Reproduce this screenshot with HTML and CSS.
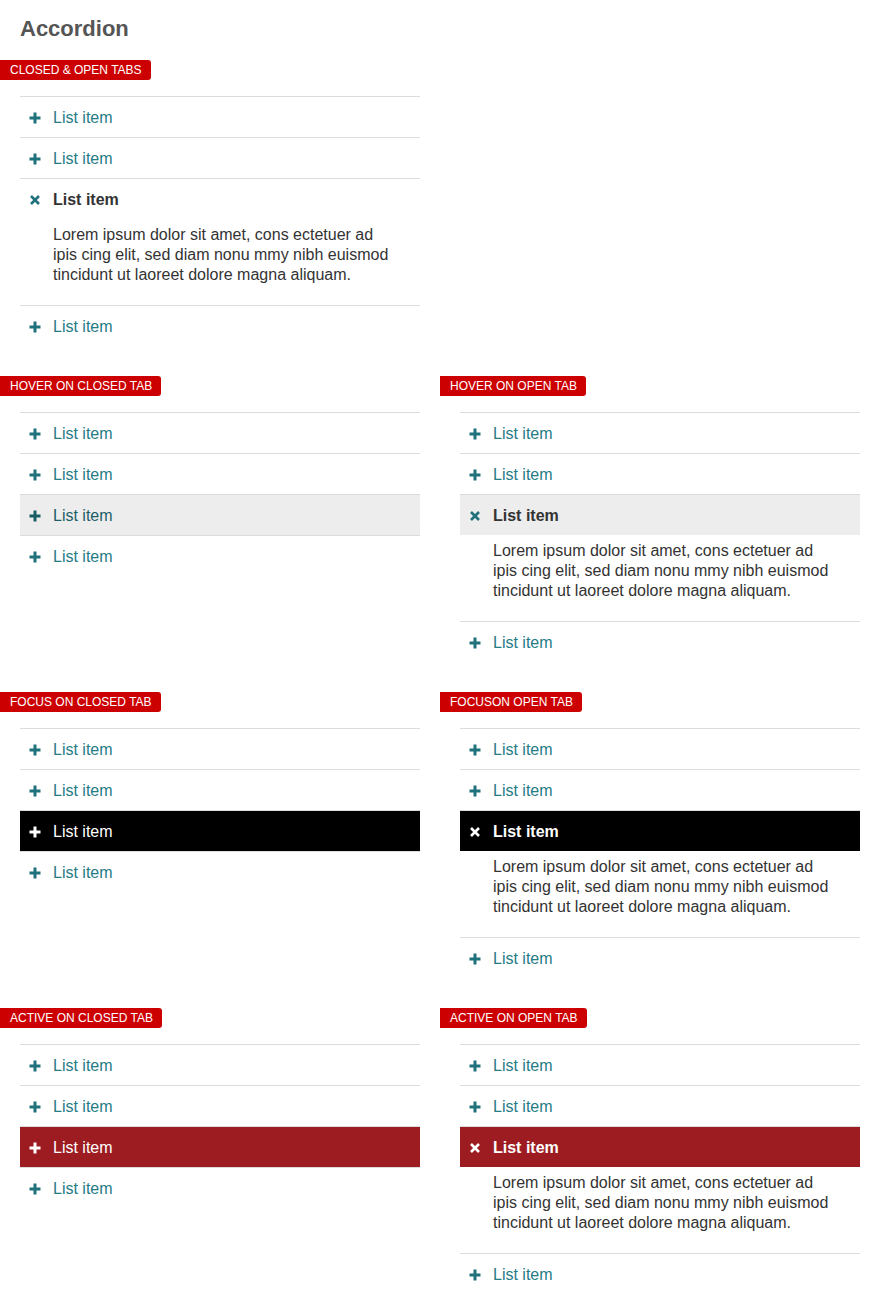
FILE: index.html
```html
<!DOCTYPE html>
<html>
<head>
<meta charset="utf-8">
<link rel="stylesheet" href="styles.css">
</head>
<body>
<h1 class="title">Accordion</h1>

<div class="grid">
  <section class="demo">
    <div class="badge">CLOSED &amp; OPEN TABS</div>
    <ul class="acc">
      <li class="item"><div class="head"><svg class="ico" viewBox="0 0 12 12"><path d="M6 0.5v11M0.5 6h11"/></svg><span>List item</span></div></li>
      <li class="item"><div class="head"><svg class="ico" viewBox="0 0 12 12"><path d="M6 0.5v11M0.5 6h11"/></svg><span>List item</span></div></li>
      <li class="item open"><div class="head"><svg class="ico x" viewBox="0 0 12 12"><path d="M2 2l8 8M10 2l-8 8"/></svg><span>List item</span></div>
        <p class="body">Lorem ipsum dolor sit amet, cons ectetuer ad ipis cing elit, sed diam nonu mmy nibh euismod tincidunt ut laoreet dolore magna aliquam.</p></li>
      <li class="item"><div class="head"><svg class="ico" viewBox="0 0 12 12"><path d="M6 0.5v11M0.5 6h11"/></svg><span>List item</span></div></li>
    </ul>
  </section>
  <section class="demo"></section>

  <section class="demo">
    <div class="badge">HOVER ON CLOSED TAB</div>
    <ul class="acc">
      <li class="item"><div class="head"><svg class="ico" viewBox="0 0 12 12"><path d="M6 0.5v11M0.5 6h11"/></svg><span>List item</span></div></li>
      <li class="item"><div class="head"><svg class="ico" viewBox="0 0 12 12"><path d="M6 0.5v11M0.5 6h11"/></svg><span>List item</span></div></li>
      <li class="item hover"><div class="head"><svg class="ico" viewBox="0 0 12 12"><path d="M6 0.5v11M0.5 6h11"/></svg><span>List item</span></div></li>
      <li class="item"><div class="head"><svg class="ico" viewBox="0 0 12 12"><path d="M6 0.5v11M0.5 6h11"/></svg><span>List item</span></div></li>
    </ul>
  </section>
  <section class="demo">
    <div class="badge">HOVER ON OPEN TAB</div>
    <ul class="acc">
      <li class="item"><div class="head"><svg class="ico" viewBox="0 0 12 12"><path d="M6 0.5v11M0.5 6h11"/></svg><span>List item</span></div></li>
      <li class="item"><div class="head"><svg class="ico" viewBox="0 0 12 12"><path d="M6 0.5v11M0.5 6h11"/></svg><span>List item</span></div></li>
      <li class="item open hover"><div class="head"><svg class="ico x" viewBox="0 0 12 12"><path d="M2 2l8 8M10 2l-8 8"/></svg><span>List item</span></div>
        <p class="body">Lorem ipsum dolor sit amet, cons ectetuer ad ipis cing elit, sed diam nonu mmy nibh euismod tincidunt ut laoreet dolore magna aliquam.</p></li>
      <li class="item"><div class="head"><svg class="ico" viewBox="0 0 12 12"><path d="M6 0.5v11M0.5 6h11"/></svg><span>List item</span></div></li>
    </ul>
  </section>

  <section class="demo">
    <div class="badge">FOCUS ON CLOSED TAB</div>
    <ul class="acc">
      <li class="item"><div class="head"><svg class="ico" viewBox="0 0 12 12"><path d="M6 0.5v11M0.5 6h11"/></svg><span>List item</span></div></li>
      <li class="item"><div class="head"><svg class="ico" viewBox="0 0 12 12"><path d="M6 0.5v11M0.5 6h11"/></svg><span>List item</span></div></li>
      <li class="item focus"><div class="head"><svg class="ico" viewBox="0 0 12 12"><path d="M6 0.5v11M0.5 6h11"/></svg><span>List item</span></div></li>
      <li class="item"><div class="head"><svg class="ico" viewBox="0 0 12 12"><path d="M6 0.5v11M0.5 6h11"/></svg><span>List item</span></div></li>
    </ul>
  </section>
  <section class="demo">
    <div class="badge">FOCUSON OPEN TAB</div>
    <ul class="acc">
      <li class="item"><div class="head"><svg class="ico" viewBox="0 0 12 12"><path d="M6 0.5v11M0.5 6h11"/></svg><span>List item</span></div></li>
      <li class="item"><div class="head"><svg class="ico" viewBox="0 0 12 12"><path d="M6 0.5v11M0.5 6h11"/></svg><span>List item</span></div></li>
      <li class="item open focus"><div class="head"><svg class="ico x" viewBox="0 0 12 12"><path d="M2 2l8 8M10 2l-8 8"/></svg><span>List item</span></div>
        <p class="body">Lorem ipsum dolor sit amet, cons ectetuer ad ipis cing elit, sed diam nonu mmy nibh euismod tincidunt ut laoreet dolore magna aliquam.</p></li>
      <li class="item"><div class="head"><svg class="ico" viewBox="0 0 12 12"><path d="M6 0.5v11M0.5 6h11"/></svg><span>List item</span></div></li>
    </ul>
  </section>

  <section class="demo">
    <div class="badge">ACTIVE ON CLOSED TAB</div>
    <ul class="acc">
      <li class="item"><div class="head"><svg class="ico" viewBox="0 0 12 12"><path d="M6 0.5v11M0.5 6h11"/></svg><span>List item</span></div></li>
      <li class="item"><div class="head"><svg class="ico" viewBox="0 0 12 12"><path d="M6 0.5v11M0.5 6h11"/></svg><span>List item</span></div></li>
      <li class="item active"><div class="head"><svg class="ico" viewBox="0 0 12 12"><path d="M6 0.5v11M0.5 6h11"/></svg><span>List item</span></div></li>
      <li class="item"><div class="head"><svg class="ico" viewBox="0 0 12 12"><path d="M6 0.5v11M0.5 6h11"/></svg><span>List item</span></div></li>
    </ul>
  </section>
  <section class="demo">
    <div class="badge">ACTIVE ON OPEN TAB</div>
    <ul class="acc">
      <li class="item"><div class="head"><svg class="ico" viewBox="0 0 12 12"><path d="M6 0.5v11M0.5 6h11"/></svg><span>List item</span></div></li>
      <li class="item"><div class="head"><svg class="ico" viewBox="0 0 12 12"><path d="M6 0.5v11M0.5 6h11"/></svg><span>List item</span></div></li>
      <li class="item open active"><div class="head"><svg class="ico x" viewBox="0 0 12 12"><path d="M2 2l8 8M10 2l-8 8"/></svg><span>List item</span></div>
        <p class="body">Lorem ipsum dolor sit amet, cons ectetuer ad ipis cing elit, sed diam nonu mmy nibh euismod tincidunt ut laoreet dolore magna aliquam.</p></li>
      <li class="item"><div class="head"><svg class="ico" viewBox="0 0 12 12"><path d="M6 0.5v11M0.5 6h11"/></svg><span>List item</span></div></li>
    </ul>
  </section>
</div>
</body>
</html>
```
FILE: styles.css
```css
* { box-sizing: border-box; }
html, body { margin: 0; padding: 0; background: #fff; }
body {
  width: 880px;
  font-family: "Liberation Sans", Arial, Helvetica, sans-serif;
  color: #333;
}
.title {
  margin: 0 0 19px 0;
  padding: 17px 0 0 20px;
  font-size: 22px;
  line-height: 24px;
  font-weight: bold;
  color: #555;
}
.grid {
  display: grid;
  grid-template-columns: 420px 420px;
  column-gap: 20px;
  row-gap: 30px;
}
.demo { min-width: 0; }
.badge {
  display: inline-block;
  height: 20px;
  line-height: 20px;
  padding: 0 9px 0 10px;
  background: #cc0000;
  color: #fff;
  font-size: 12px;
  border-radius: 0 3px 3px 0;
  vertical-align: top;
}
.acc {
  list-style: none;
  margin: 16px 0 0 20px;
  padding: 0;
  width: 400px;
}
.item { border-top: 1px solid #dcdcdc; }
.head {
  display: flex;
  align-items: center;
  height: 40px;
  padding: 2px 0 0 9px;
  color: #257b86;
  font-size: 16px;
}
.ico {
  width: 12px;
  height: 12px;
  margin: -1px 12px 0 0;
  flex: none;
  stroke: #1f717c;
  stroke-width: 3;
  fill: none;
}
.ico.x { stroke-width: 2.6; }
.open .head { color: #333; font-weight: bold; }
.body {
  margin: 0;
  padding: 6px 20px 20px 33px;
  font-size: 16px;
  line-height: 20px;
  color: #333;
}
.hover .head { background: #ededed; color: #1b5e66; }
.hover .ico { stroke: #185b63; }
.open.hover .head { color: #333; }
.open.hover .ico { stroke: #1f717c; }
.focus .head { background: #000; color: #fff; }
.focus .ico { stroke: #fff; }
.active .head { background: #9c1c21; color: #fff; }
.active .ico { stroke: #fff; }
```
